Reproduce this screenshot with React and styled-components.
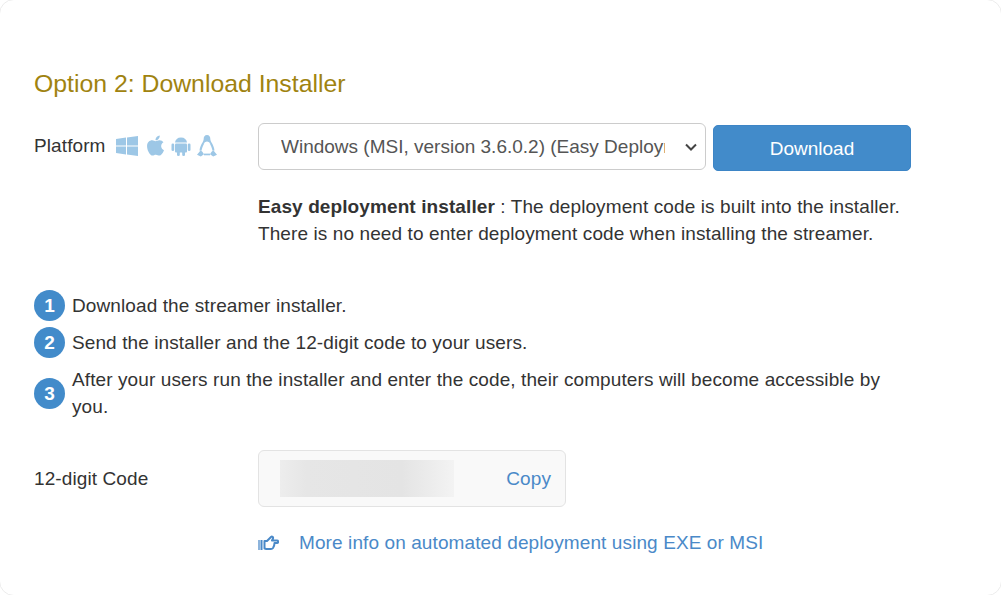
import styled, { createGlobalStyle } from "styled-components";
import { FaApple } from "react-icons/fa";

const Global = createGlobalStyle`
  html, body {
    margin: 0;
    padding: 0;
    background: #fff;
    overflow: hidden;
  }
  * {
    box-sizing: border-box;
  }
`;

const Card = styled.div`
  width: 1003px;
  height: 597px;
  margin: -1px;
  padding: 69px 34px 0;
  background: #fff;
  border: 1px solid #ececec;
  border-radius: 15px;
  font-family: "Liberation Sans", Arial, sans-serif;
  font-size: 19px;
  letter-spacing: 0.1px;
  line-height: 27px;
  color: #333;
`;

const Title = styled.h3`
  margin: 0 0 24px;
  font-size: 24.8px;
  letter-spacing: 0;
  line-height: 30px;
  font-weight: 400;
  color: #a08310;
`;

const Row = styled.div`
  display: flex;
  align-items: ${(p) => p.$align || "flex-start"};
  margin-top: ${(p) => p.$top || 0}px;
`;

const Label = styled.div`
  width: 224px;
  flex: none;
  display: flex;
  align-items: center;
  gap: 10px;
  min-height: 45px;
`;

const Icons = styled.span`
  display: inline-flex;
  align-items: center;
  gap: 6px;
  color: #9dc7e6;
  & > svg {
    flex: none;
  }
`;

const AppleIcon = styled(FaApple)`
  margin-right: -1.5px;
`;

const Select = styled.select`
  width: 448px;
  height: 47px;
  padding: 0 40px 0 22px;
  border: 1px solid #ccc;
  border-radius: 6px;
  font: inherit;
  color: #555;
  appearance: none;
  background: #fff
    url("data:image/svg+xml,%3Csvg xmlns='http://www.w3.org/2000/svg' width='12' height='8'%3E%3Cpath d='M1 1.5l5 5 5-5' fill='none' stroke='%23444' stroke-width='2'/%3E%3C/svg%3E")
    no-repeat right 8px center;
`;

const Button = styled.button`
  width: 198px;
  height: 46px;
  margin: 2px 0 0 7px;
  border: 1px solid #3d85c6;
  border-radius: 5px;
  background: #428bca;
  color: #fff;
  font: inherit;
`;

const Note = styled.p`
  margin: 22px 0 0 224px;
  width: 650px;
`;

const Steps = styled.ol`
  list-style: none;
  margin: 43px 0 0;
  padding: 0;
  width: 860px;
  display: flex;
  flex-direction: column;
  gap: 6px;
`;

const Step = styled.li`
  display: flex;
  align-items: center;
  gap: 7px;
  margin-top: ${(p) => p.$top || 0}px;
`;

const Num = styled.span`
  width: 31px;
  height: 31px;
  flex: none;
  border-radius: 50%;
  background: #428bca;
  color: #fff;
  font-weight: 700;
  text-align: center;
  line-height: 31px;
`;

const CodeBox = styled.div`
  width: 308px;
  height: 57px;
  display: flex;
  align-items: center;
  justify-content: space-between;
  padding: 0 14px 0 21px;
  border: 1px solid #e3e3e3;
  border-radius: 6px;
  background: #f9f9f9;
`;

const Blur = styled.div`
  width: 174px;
  height: 37px;
  background: linear-gradient(90deg, #ededed, #e6e6e6 15%, #e4e4e4 70%, #f3f3f3);
`;

const Link = styled.a`
  color: #4a89c8;
  text-decoration: none;
`;

const More = styled.div`
  display: flex;
  align-items: center;
  gap: 20px;
  margin: 22px 0 0 224px;
`;

const WindowsIcon = () => (
  <svg width="22" height="22" viewBox="0 0 22 22" fill="currentColor">
    <path d="M0 4l10-1.400V10.400H0zM11 2.400L22 1v9.400H11zM0 11.600h10V19.400L0 18zM11 11.600h11V21l-11-1.400z" />
  </svg>
);

const AndroidIcon = () => (
  <svg width="20" height="20" viewBox="0 0 20 20" fill="currentColor">
    <path d="M4 6.500C4.300 3.500 6.500 1.500 10 1.500s5.700 2 6 5z" />
    <rect x="4" y="7.500" width="12" height="9" rx="1" />
    <rect x="0.500" y="7.500" width="2.700" height="7.500" rx="1.300" />
    <rect x="16.800" y="7.500" width="2.700" height="7.500" rx="1.300" />
    <rect x="6" y="15" width="2.800" height="5" rx="1.300" />
    <rect x="11.200" y="15" width="2.800" height="5" rx="1.300" />
  </svg>
);

const LinuxIcon = () => (
  <svg width="20" height="22" viewBox="0 0 20 22" fill="currentColor">
    <path d="M10 0c2.300 0 3.300 1.800 3.300 3.800 0 1.500.6 2.600 1.300 3.800l-1.600.8c-.8-1-1.800-1.800-3-1.800s-2.200.8-3 1.800l-1.600-.8c.7-1.200 1.300-2.300 1.300-3.800C6.700 1.800 7.700 0 10 0z" />
    <path d="M14.600 7.600c1.300 2.300 2.600 5 2.900 8l-2 .2c-.4-2.600-1.500-5-2.700-7.400zM5.400 7.600C4.100 9.900 2.800 12.600 2.500 15.600l2 .2c.4-2.600 1.500-5 2.700-7.400z" />
    <path d="M3.500 15.500c1.300.4 2.500 1.800 3.500 3.800L3.800 21.500 0 19.700zM16.500 15.500c-1.300.4-2.500 1.800-3.500 3.800l3.200 2.200 3.800-1.800z" />
    <path d="M7 18.600h6v1.700H7z" />
  </svg>
);

const HandIcon = () => (
  <svg width="21" height="16" viewBox="0 0 21 16" fill="none">
    <rect x="0" y="5" width="2" height="10" fill="#8db4dc" />
    <rect x="2.500" y="5" width="2" height="10" fill="#4a89c8" />
    <path
      d="M6.500 6h2.500l4-4c1-1 2.500 0 2 1.500L14 5.500h5c1.500 0 1.500 2.500 0 2.500h-2.500c0 2-.5 3.500-1.500 5-.5.7-1 1-2 1h-4c-1 0-2-.5-2.500-.5z"
      stroke="#4a89c8"
      strokeWidth="2"
      strokeLinejoin="round"
    />
  </svg>
);

export default function App() {
  return (
    <Card>
      <Global />
      <Title>Option 2: Download Installer</Title>
      <Row>
        <Label>
          Platform
          <Icons>
            <WindowsIcon />
            <AppleIcon size={23} />
            <AndroidIcon />
            <LinuxIcon />
          </Icons>
        </Label>
        <Select>
          <option>Windows (MSI, version 3.6.0.2) (Easy Deployment Installer)</option>
        </Select>
        <Button>Download</Button>
      </Row>
      <Note>
        <b>Easy deployment installer</b> : The deployment code is built into the installer. There is no need to enter
        deployment code when installing the streamer.
      </Note>
      <Steps>
        <Step>
          <Num>1</Num>Download the streamer installer.
        </Step>
        <Step>
          <Num>2</Num>Send the installer and the 12-digit code to your users.
        </Step>
        <Step $top={2}>
          <Num>3</Num>After your users run the installer and enter the code, their computers will become accessible by
          you.
        </Step>
      </Steps>
      <Row $align="center" $top={30}>
        <Label>12-digit Code</Label>
        <CodeBox>
          <Blur />
          <Link href="#">Copy</Link>
        </CodeBox>
      </Row>
      <More>
        <HandIcon />
        <Link href="#">More info on automated deployment using EXE or MSI</Link>
      </More>
    </Card>
  );
}
